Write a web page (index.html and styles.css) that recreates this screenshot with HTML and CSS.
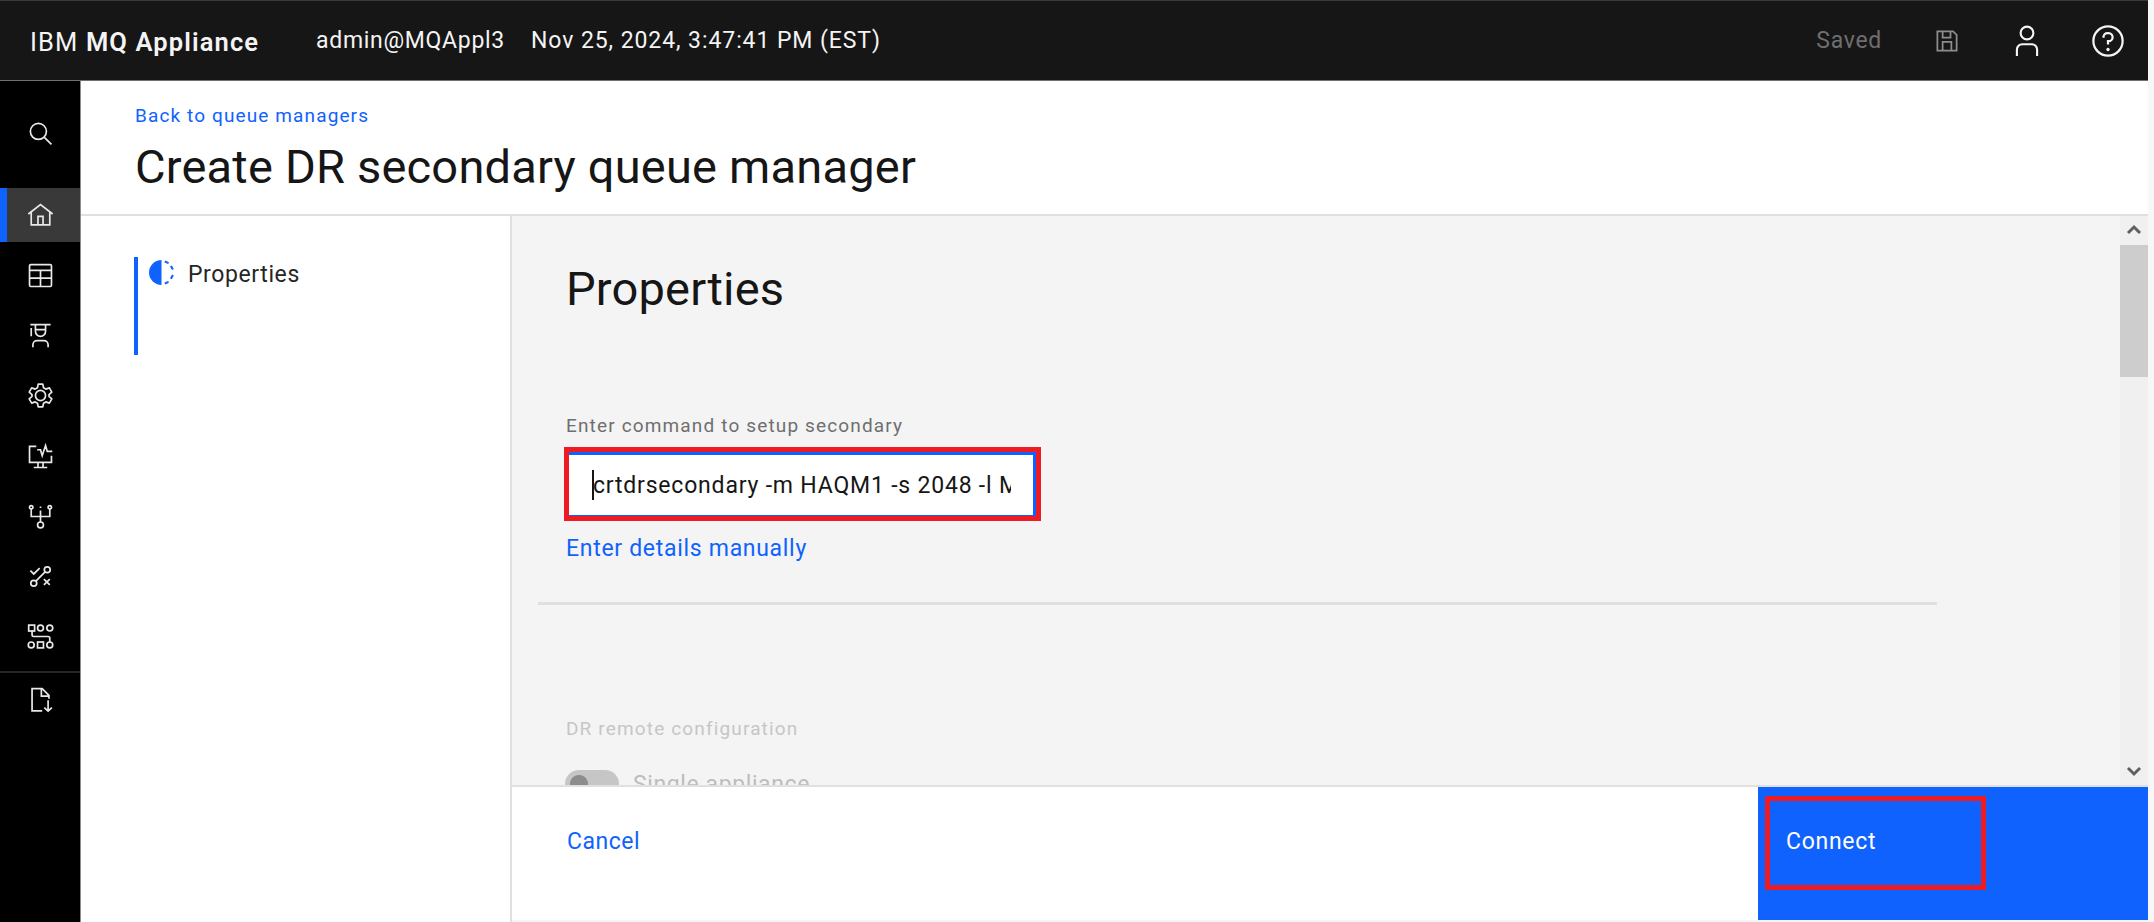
FILE: index.html
```html
<!DOCTYPE html>
<html lang="en">
<head>
<meta charset="utf-8">
<title>IBM MQ Appliance</title>
<link rel="stylesheet" href="styles.css">
</head>
<body>
<div class="app">
  <header class="topbar">
    <div class="brand">IBM <b>MQ Appliance</b></div>
    <div class="user">admin@MQAppl3</div>
    <div class="clock">Nov 25, 2024, 3:47:41 PM (EST)</div>
    <div class="tools">
      <span class="saved">Saved</span>
      <svg class="ico-save" viewBox="0 0 32 32"><path d="M5 5h18l4 4v18H5zM11 5v7h9V5M11 27V17h10v10"/></svg>
      <svg class="ico-user" viewBox="0 0 32 32"><circle cx="16" cy="8.500" r="6"/><path d="M6.500 30v-6a5 5 0 0 1 5-5h9a5 5 0 0 1 5 5v6"/></svg>
      <svg class="ico-help" viewBox="0 0 32 32"><circle cx="16" cy="16" r="13"/><path d="M12 13v-.5A3.500 3.500 0 0 1 15.500 9h1a3.500 3.500 0 0 1 0 7.200H16V19"/><circle class="dot" cx="16" cy="23.500" r="1.500"/></svg>
    </div>
  </header>
  <div class="body">
    <nav class="rail">
      <a class="item search"><svg viewBox="0 0 32 32"><circle cx="13.500" cy="13.500" r="9.500"/><path d="M20.500 20.500l8.500 8.500"/></svg></a>
      <a class="item active"><svg viewBox="0 0 32 32"><path d="M1.600 14.200L16 3l14.400 11.200M5 12v15h22V12M13 27V17h6v10"/></svg></a>
      <a class="item"><svg viewBox="0 0 32 32"><rect x="3" y="3" width="26" height="26" rx="1.500"/><path d="M3 10h26M3 19h26M16 10v19"/></svg></a>
      <a class="item"><svg viewBox="0 0 32 32"><path d="M4 3h24M5 7v10M10 3v8a6 6 0 0 0 12 0V3M10 9h12M7 30v-3a5 5 0 0 1 5-5h8a5 5 0 0 1 5 5v3"/></svg></a>
      <a class="item"><svg viewBox="0 0 32 32"><circle cx="16" cy="16" r="6"/><path stroke-linejoin="round" d="M13.300 2.500h5.400l.9 4.300 2.700 1.600 4.200-1.400 2.900 5-3.300 2.900v2.200l3.300 2.900-2.900 5-4.200-1.400-2.700 1.600-.9 4.300h-5.400l-.9-4.300-2.700-1.600L5.500 25l-2.900-5 3.300-2.900v-2.200L2.600 12l2.900-5 4.200 1.400 2.700-1.600z"/></svg></a>
      <a class="item"><svg viewBox="0 0 32 32"><path d="M11 4H3v19h26v-8M8 29h16M13 23v6M19 23v6M12 8h4l2 7 4-12 2 7h6"/></svg></a>
      <a class="item"><svg viewBox="0 0 32 32"><circle cx="5" cy="5" r="2"/><circle cx="27" cy="5" r="2"/><path d="M5 7v9h22V7M16 4v2M16 9v14"/><circle cx="16" cy="26" r="3.500"/></svg></a>
      <a class="item"><svg viewBox="0 0 32 32"><circle cx="24" cy="8" r="3.500"/><circle cx="8" cy="24" r="3.500"/><path d="M10.500 21.500l11-11M4 9l4 4 7-7M20 19l7 7M27 19l-7 7"/></svg></a>
      <a class="item"><svg viewBox="0 0 32 32"><rect x="2" y="2.500" width="7" height="7"/><circle cx="16" cy="6" r="3.500"/><circle cx="27" cy="6" r="3.500"/><circle cx="5" cy="26" r="3.500"/><rect x="12.500" y="22.500" width="7" height="7"/><circle cx="27" cy="26" r="3.500"/><path d="M6 9v5a2 2 0 0 0 2 2h17a2 2 0 0 1 2 2v5"/></svg></a>
      <a class="item last"><svg viewBox="0 0 32 32"><path d="M18 29.500H6V3h12l8 8v4M17 3v9h9M25 17v12M20.500 25.500L25 29.700l4.500-4.200"/></svg></a>
    </nav>
    <main class="page">
      <div class="heading">
        <a class="back">Back to queue managers</a>
        <h1>Create DR secondary queue manager</h1>
      </div>
      <div class="split">
        <aside class="steps">
          <div class="step">
            <svg viewBox="0 0 24 24"><path class="half" d="M12 0a12 12 0 0 0 0 24z"/><path d="M15.200 1.500l3.600 1.500M21 5.800l2 3.400M23 14.500l-2 3.600M18.800 21l-3.600 1.500"/></svg>
            <span>Properties</span>
          </div>
        </aside>
        <section class="work">
          <div class="scroll">
            <div class="form">
              <h2>Properties</h2>
              <div class="label">Enter command to setup secondary</div>
              <div class="field"><div class="inner"><i class="caret"></i><span class="value">crtdrsecondary -m HAQM1 -s 2048 -l MQ</span></div></div>
              <a class="manual">Enter details manually</a>
              <div class="rule"></div>
              <div class="label off">DR remote configuration</div>
              <div class="toggle"><i class="track"></i><span>Single appliance</span></div>
            </div>
            <div class="bar">
              <svg viewBox="0 0 16 12"><path d="M2 10l6-6 6 6"/></svg>
              <i class="thumb"></i>
              <svg class="down" viewBox="0 0 16 12"><path d="M2 2l6 6 6-6"/></svg>
            </div>
          </div>
          <footer class="actions">
            <a class="cancel">Cancel</a>
            <a class="connect"><span class="mark">Connect</span></a>
          </footer>
        </section>
      </div>
    </main>
  </div>
</div>
</body>
</html>
```
FILE: styles.css
```css
* { box-sizing: border-box; }
body { margin: 0; height: 922px; overflow: hidden; background: #f7f7f7; color: #161616; font: 23px/30px Roboto, "Liberation Sans", sans-serif; letter-spacing: .7px; }
h1, h2 { margin: 0; font-weight: 400; font-size: 47px; line-height: 60px; letter-spacing: .2px; }
svg { display: block; fill: none; stroke: currentColor; stroke-width: 2; flex: none; }
.app { width: 2148px; height: 922px; display: flex; flex-direction: column; background: #fff; }
.topbar { height: 81px; flex: none; display: flex; align-items: center; padding: 0 22px 0 30px; background: #161616; border-top: 1px solid #393939; border-bottom: 1px solid #6f6f6f; color: #f4f4f4; }
.brand { width: 286px; font-size: 25.500px; letter-spacing: 1.120px; padding-top: 2px; white-space: nowrap; }
.brand b { font-weight: 600; }
.user, .clock, .saved { padding-top: 1px; }
.user { width: 215px; }
.clock { letter-spacing: .92px; }
.tools { margin-left: auto; display: flex; align-items: center; }
.saved { color: #6f6f6f; margin-right: 51px; }
.ico-save { width: 28px; height: 28px; color: #8d8d8d; margin-right: 49px; }
.ico-user { width: 34px; height: 34px; margin-right: 46px; }
.ico-help { width: 36px; height: 36px; }
.dot { fill: currentColor; stroke: none; }
.body { flex: 1; display: flex; min-height: 0; }
.rail { width: 81px; background: #000; border-right: 1px solid #8d8d8d; color: #e8e8e8; }
.item { height: 60.300px; display: flex; align-items: center; justify-content: center; }
.item svg { width: 27px; height: 27px; }
.item.search { height: 107px; padding-bottom: 2px; }
.item.active { height: 54px; background: #393939; border-left: 7px solid #0f62fe; padding-right: 7px; margin-bottom: 3px; }
.item.last { border-top: 2px solid #262626; margin-top: 4px; padding-bottom: 6px; }
.page { flex: 1; display: flex; flex-direction: column; min-width: 0; }
.heading { height: 135px; border-bottom: 2px solid #e0e0e0; padding: 20px 54px 0; }
.back { display: block; color: #0f62fe; font-size: 19px; letter-spacing: 1.120px; }
h1 { margin-top: 6px; }
.split { flex: 1; display: flex; min-height: 0; }
.steps { width: 431px; border-right: 2px solid #e0e0e0; padding: 41px 53px; }
.step { height: 98px; border-left: 4px solid #0f62fe; display: flex; padding-left: 11px; color: #262626; letter-spacing: .6px; }
.step svg { width: 25px; height: 25px; margin: 3px 14px 0 0; color: #0f62fe; }
.step span { padding-top: 3px; }
.half { fill: currentColor; stroke: none; }
.work { flex: 1; display: flex; flex-direction: column; min-width: 0; }
.scroll { height: 569px; display: flex; background: #f4f4f4; overflow: hidden; }
.form { flex: 1; padding: 43px 0 0 54px; }
.label { font-size: 19px; letter-spacing: 1.150px; color: #6f6f6f; margin-top: 92px; height: 30px; }
.field { width: 477px; height: 74px; margin: 6px 0 13px -2px; border: 5px solid #ed1c24; background: #fff; }
.inner { height: 64px; border: solid #0f62fe; border-width: 3px 3px 1px 0; padding: 0 22px 0 23px; display: flex; align-items: center; overflow: hidden; }
.caret { width: 2px; height: 30px; background: #161616; margin-right: -1px; flex: none; }
.value { flex: 1; overflow: hidden; white-space: nowrap; letter-spacing: .8px; padding-top: 1px; }
.manual { display: block; color: #0f62fe; }
.rule { width: 1399px; height: 3px; background: #e0e0e0; margin: 38px 0 0 -28px; }
.label.off { margin-top: 109px; color: #c6c6c6; }
.toggle { display: flex; margin: 26px 0 0 -1px; color: #bdbdbd; letter-spacing: .6px; }
.track { width: 54px; height: 28px; border-radius: 14px; margin-right: 14px; background: radial-gradient(circle at 14px 14px, #8d8d8d 8.500px, #c6c6c6 9.500px); }
.bar { width: 28px; background: #f0f0f0; display: flex; flex-direction: column; align-items: center; color: #606060; padding: 7px 0 7px; }
.bar svg { width: 16px; height: 12px; stroke-width: 3; }
.thumb { width: 28px; height: 132px; background: #cdcdcd; margin-top: 10px; }
.down { margin-top: auto; }
.actions { flex: 1; display: flex; justify-content: space-between; border-top: 2px solid #e0e0e0; border-bottom: 2px solid #f4f4f4; }
.cancel { padding: 40px 0 0 55px; color: #0f62fe; letter-spacing: .5px; }
.connect { width: 390px; background: #0f62fe; color: #fff; padding: 9px 7px; }
.mark { display: block; width: 221px; height: 94px; border: 5px solid #ed1c24; padding: 26px 0 0 16px; }
```
